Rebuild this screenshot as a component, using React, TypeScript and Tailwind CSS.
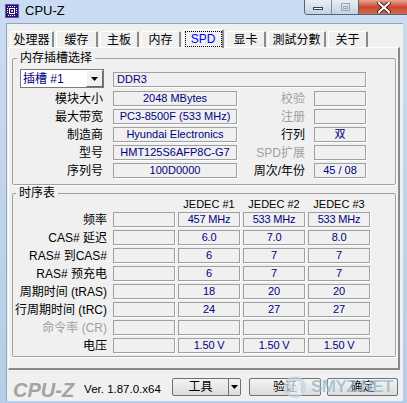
import React from "react";

const FONT = "font-['Liberation_Sans','Noto_Sans_CJK_SC',sans-serif]";

function Field({ className = "", children }: { className?: string; children?: React.ReactNode }) {
  return (
    <div
      className={`h-[15px] border border-[#a0a0a0] shadow-[1px_1px_0_#ffffff] bg-[#f0f0f0] flex items-center text-[11px] leading-none text-[#000080] whitespace-nowrap overflow-hidden ${className}`}
    >
      {children}
    </div>
  );
}

function Label({ className = "", children }: { className?: string; children?: React.ReactNode }) {
  return (
    <div className={`h-[15px] leading-[15px] text-[12px] text-right whitespace-nowrap pt-[1px] ${className}`}>
      {children}
    </div>
  );
}

function CpuIcon() {
  return (
    <svg width="14" height="14" viewBox="0 0 14 14">
      <rect x="0" y="0" width="14" height="14" fill="#2d1470" />
      <rect x="0.5" y="0.5" width="13" height="13" fill="none" stroke="#6b4cc0" />
      <g fill="#ffffff">
        <rect x="3" y="2" width="1" height="1" />
        <rect x="5" y="2" width="1" height="1" />
        <rect x="7" y="2" width="1" height="1" />
        <rect x="9" y="2" width="1" height="1" />
        <rect x="3" y="11" width="1" height="1" />
        <rect x="5" y="11" width="1" height="1" />
        <rect x="7" y="11" width="1" height="1" />
        <rect x="9" y="11" width="1" height="1" />
        <rect x="2" y="4" width="1" height="1" />
        <rect x="2" y="6" width="1" height="1" />
        <rect x="2" y="8" width="1" height="1" />
        <rect x="11" y="4" width="1" height="1" />
        <rect x="11" y="6" width="1" height="1" />
        <rect x="11" y="8" width="1" height="1" />
      </g>
      <rect x="4.5" y="4.5" width="5" height="5" fill="none" stroke="#ffffff" />
      <rect x="6" y="6" width="2" height="2" fill="#c9b8ff" />
    </svg>
  );
}

function TitleBar() {
  return (
    <div className="h-[23px] flex items-start">
      <div className="ml-[5px] mt-[4px]">
        <CpuIcon />
      </div>
      <span className="ml-[6px] mt-[3px] text-[13px] leading-[16px] text-black">CPU-Z</span>
      <div className="ml-auto flex h-[15px] border border-t-0 border-[#54647a] rounded-bl-[4px] overflow-hidden -mr-[3px]">
        <div className="w-[27px] h-full bg-gradient-to-b from-[#e9eff7] to-[#c4d2e3] border-r border-[#7d8ea4] flex items-center justify-center">
          <div className="w-[10px] h-[3px] bg-white border border-[#34445a] mt-[3px]" />
        </div>
        <div className="w-[27px] h-full bg-gradient-to-b from-[#e9eff7] to-[#c4d2e3] border-r border-[#54647a] flex items-center justify-center">
          <div className="w-[9px] h-[8px] border border-[#9aa7b8] flex items-center justify-center">
            <div className="w-[5px] h-[3px] border border-[#9aa7b8]" />
          </div>
        </div>
        <div className="w-[50px] h-full bg-gradient-to-b from-[#e8a493] via-[#c9472f] to-[#d8684e] flex items-center justify-center">
          <svg width="14" height="11" viewBox="0 0 14 11">
            <path d="M2 1 L12 10 M12 1 L2 10" stroke="#3a2020" strokeWidth="4" strokeLinecap="round" />
            <path d="M2 1 L12 10 M12 1 L2 10" stroke="#ffffff" strokeWidth="2.2" strokeLinecap="round" />
          </svg>
        </div>
      </div>
    </div>
  );
}

function Tab({ className = "", children }: { className?: string; children?: React.ReactNode }) {
  return (
    <div
      className={`h-[16px] border-t border-l border-white border-r-2 border-r-[#8a8a8a] rounded-t-[2px] bg-[#f0f0f0] flex items-center justify-center text-[12px] leading-none text-black ${className}`}
    >
      {children}
    </div>
  );
}

function Tabs() {
  return (
    <div className="mt-[5px] h-[18px] pl-[3px] flex items-end gap-[2px]">
      <Tab className="w-[44px]">处理器</Tab>
      <Tab className="w-[42px]">缓存</Tab>
      <Tab className="w-[39px]">主板</Tab>
      <Tab className="w-[40px]">内存</Tab>
      <div className="w-[41px] h-[19px] -mb-[1px] relative z-10 border-t border-l border-white border-r-2 border-r-[#8a8a8a] rounded-t-[2px] bg-[#f0f0f0] flex items-start justify-center pt-[1px]">
        <div className="w-[37px] h-[16px] border border-dotted border-black flex items-center justify-center text-[12px] leading-none text-[#0000ff]">
          SPD
        </div>
      </div>
      <Tab className="w-[40px]">显卡</Tab>
      <Tab className="w-[58px]">測試分數</Tab>
      <Tab className="w-[40px]">关于</Tab>
    </div>
  );
}

function Dropdown() {
  return (
    <div className="w-[84px] h-[19px] bg-white border border-[#7a7a7a] flex items-center">
      <span className="flex-1 pl-[2px] text-[12px] leading-none text-[#000080] whitespace-nowrap">插槽 #1</span>
      <div className="w-[17px] h-[17px] bg-[#f0f0f0] border border-t-white border-l-white border-r-[#696969] border-b-[#696969] flex items-center justify-center">
        <svg width="7" height="4" viewBox="0 0 7 4">
          <path d="M0 0 H7 L3.5 4 Z" fill="#000000" />
        </svg>
      </div>
    </div>
  );
}

function SlotGroup() {
  const rows: [string, string, string, string, boolean][] = [
    ["模块大小", "2048 MBytes", "校验", "", false],
    ["最大带宽", "PC3-8500F (533 MHz)", "注册", "", false],
    ["制造商", "Hyundai Electronics", "行列", "双", true],
    ["型号", "HMT125S6AFP8C-G7", "SPD扩展", "", false],
    ["序列号", "100D0000", "周次/年份", "45 / 08", true],
  ];
  return (
    <fieldset className="ml-[3px] mt-[5px] w-[384px] h-[132px] border border-[#a0a0a0] shadow-[1px_1px_0_#ffffff] rounded-[2px]">
      <legend className="ml-[4px] px-[3px] text-[12px] leading-[10px] text-black">内存插槽选择</legend>
      <div className="pl-[7px] mt-[6px] flex flex-col gap-[3px]">
        <div className="flex items-start h-[19px]">
          <Dropdown />
          <Field className="ml-[9px] mt-[3px] w-[253px] pl-[3px]">DDR3</Field>
        </div>
        {rows.map(([l, v, rl, rv, active]) => (
          <div key={l} className="flex items-start h-[15px]">
            <Label className="w-[84px] pr-[1px] text-black">{l}</Label>
            <Field className="ml-[9px] w-[124px] justify-center">{v}</Field>
            <Label className={`w-[68px] ${active ? "text-black" : "text-[#a0a0a0]"}`}>{rl}</Label>
            <Field className="ml-[9px] w-[52px] justify-center">{rv}</Field>
          </div>
        ))}
      </div>
    </fieldset>
  );
}

function TimingGroup() {
  const rows: [string, string, string, string, boolean][] = [
    ["频率", "457 MHz", "533 MHz", "533 MHz", true],
    ["CAS# 延迟", "6.0", "7.0", "8.0", true],
    ["RAS# 到CAS#", "6", "7", "7", true],
    ["RAS# 预充电", "6", "7", "7", true],
    ["周期时间 (tRAS)", "18", "20", "20", true],
    ["行周期时间 (tRC)", "24", "27", "27", true],
    ["命令率 (CR)", "", "", "", false],
    ["电压", "1.50 V", "1.50 V", "1.50 V", true],
  ];
  return (
    <fieldset className="ml-[3px] mt-[3px] w-[384px] h-[169px] border border-[#a0a0a0] shadow-[1px_1px_0_#ffffff] rounded-[2px]">
      <legend className="ml-[3px] px-[3px] text-[12px] leading-[10px] text-black">时序表</legend>
      <div className="flex h-[14px] items-start text-[11px] leading-[12px] text-black">
        <div className="w-[94px]" />
        <div className="ml-[6px] w-[62px]" />
        <div className="ml-[3px] w-[62px] text-center">JEDEC #1</div>
        <div className="ml-[3px] w-[62px] text-center">JEDEC #2</div>
        <div className="ml-[3px] w-[62px] text-center">JEDEC #3</div>
      </div>
      <div className="flex flex-col gap-[3px]">
        {rows.map(([l, a, b, c, active]) => (
          <div key={l} className="flex items-start h-[15px]">
            <Label className={`w-[94px] ${active ? "text-black" : "text-[#a0a0a0]"}`}>{l}</Label>
            <Field className="ml-[6px] w-[62px]" />
            <Field className="ml-[3px] w-[62px] justify-center tracking-[-0.2px]">{a}</Field>
            <Field className="ml-[3px] w-[62px] justify-center tracking-[-0.2px]">{b}</Field>
            <Field className="ml-[3px] w-[62px] justify-center tracking-[-0.2px]">{c}</Field>
          </div>
        ))}
      </div>
    </fieldset>
  );
}

function Button({ className = "", children }: { className?: string; children?: React.ReactNode }) {
  return (
    <div
      className={`h-[18px] border border-[#707070] rounded-[2px] bg-gradient-to-b from-[#f4f4f4] to-[#dcdcdc] flex items-center justify-center text-[12px] leading-none text-black ${className}`}
    >
      {children}
    </div>
  );
}

function BottomBar() {
  return (
    <div className="h-[30px] flex items-start relative">
      <span className="ml-[6px] mt-[10px] text-[20px] leading-[20px] font-bold italic text-[#a3a3a3]">CPU-Z</span>
      <span className="ml-[10px] mt-[13px] text-[11.5px] leading-[12px] text-black">Ver. 1.87.0.x64</span>
      <div className="ml-auto mr-[5px] mt-[8px] flex gap-[6px]">
        <div className="w-[69px] h-[18px] border border-[#707070] rounded-[2px] bg-gradient-to-b from-[#f4f4f4] to-[#dcdcdc] flex">
          <div className="flex-1 flex items-center justify-center text-[12px] leading-none">工具</div>
          <div className="w-[12px] border-l border-[#707070] flex items-center justify-center">
            <svg width="7" height="4" viewBox="0 0 7 4">
              <path d="M0 0 H7 L3.5 4 Z" fill="#000000" />
            </svg>
          </div>
        </div>
        <Button className="w-[72px] ml-[2px]">验证</Button>
        <Button className="w-[71px]">确定</Button>
      </div>
      <div className="absolute left-[277px] top-[6px] flex items-center gap-[5px] opacity-70 pointer-events-none">
        <div className="w-[22px] h-[22px] rounded-full bg-[#c2d6e2] flex items-center justify-center text-[13px] leading-none font-bold text-white">
          值
        </div>
        <span className="text-[17px] leading-[20px] font-bold text-[#8fb2c6] tracking-[-0.5px] [text-shadow:0_0_2px_#ffffff]">
          SMYZ.NET
        </span>
      </div>
    </div>
  );
}

export default function App() {
  return (
    <div className={`w-[407px] h-[403px] overflow-hidden bg-gradient-to-b from-[#c9dcf1] to-[#b5cde8] ${FONT}`}>
      <TitleBar />
      <div className="ml-[6px] w-[397px] h-[378px] bg-[#f0f0f0] border-t border-l border-[#8fa5be] flex flex-col">
        <Tabs />
        <div className="ml-[1px] w-[392px] h-[323px] border-t border-l border-white border-r-2 border-b-2 border-r-[#8a8a8a] border-b-[#8a8a8a] bg-[#f0f0f0] flex flex-col">
          <SlotGroup />
          <TimingGroup />
        </div>
        <BottomBar />
      </div>
    </div>
  );
}
